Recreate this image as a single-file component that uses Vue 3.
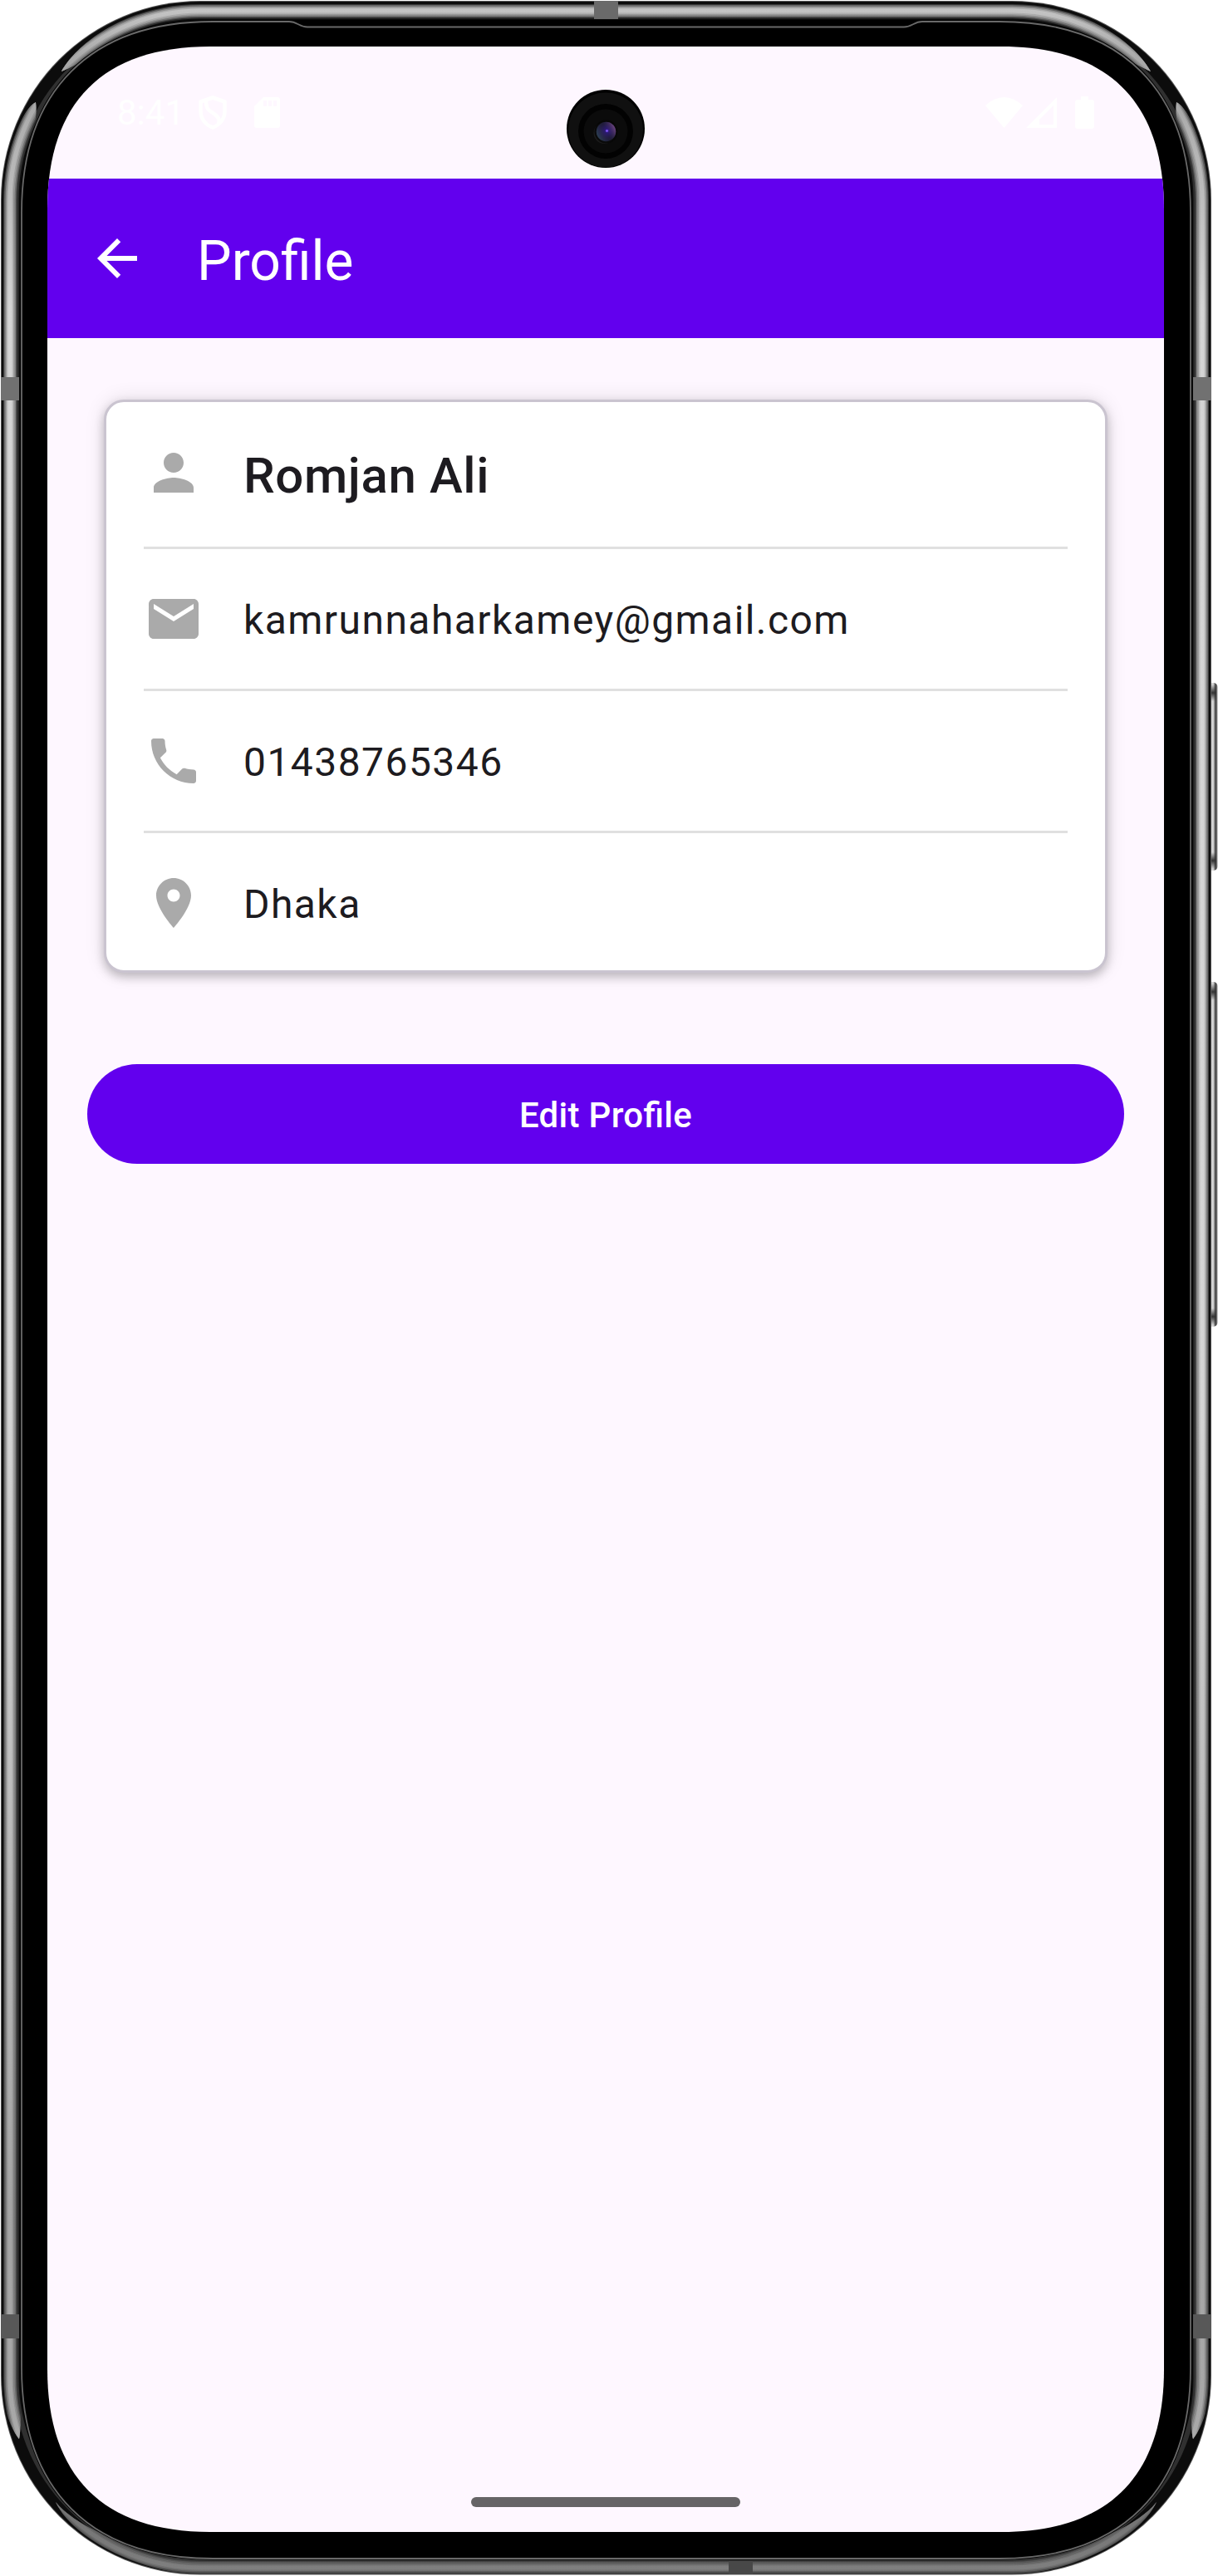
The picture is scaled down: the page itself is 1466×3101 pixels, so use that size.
<script setup>
const rows = [
  { id: 'name', text: 'Romjan Ali', lead: true, icon: 'M12 12c2.21 0 4-1.79 4-4s-1.79-4-4-4-4 1.79-4 4 1.79 4 4 4zm0 2c-2.67 0-8 1.34-8 4v2h16v-2c0-2.66-5.33-4-8-4z' },
  { id: 'email', text: 'kamrunnaharkamey@gmail.com', icon: 'M20 4H4c-1.1 0-1.99.9-1.99 2L2 18c0 1.1.9 2 2 2h16c1.1 0 2-.9 2-2V6c0-1.1-.9-2-2-2zm0 4l-8 5-8-5V6l8 5 8-5v2z' },
  { id: 'phone', text: '01438765346', icon: 'M6.62 10.79c1.44 2.83 3.76 5.14 6.59 6.59l2.2-2.2c.27-.27.67-.36 1.02-.24 1.12.37 2.33.57 3.57.57.55 0 1 .45 1 1V20c0 .55-.45 1-1 1-9.39 0-17-7.61-17-17 0-.55.45-1 1-1h3.5c.55 0 1 .45 1 1 0 1.25.2 2.45.57 3.57.11.35.03.74-.25 1.02l-2.2 2.2z' },
  { id: 'place', text: 'Dhaka', icon: 'M12 2C8.13 2 5 5.13 5 9c0 5.25 7 13 7 13s7-7.75 7-13c0-3.87-3.13-7-7-7zm0 9.5c-1.38 0-2.5-1.12-2.5-2.5s1.12-2.5 2.5-2.5 2.5 1.12 2.5 2.5-1.12 2.5-2.5 2.5z' },
]

const antennas = [
  { x: 715, y: 1, w: 29, h: 22, c: '#6a6a6a' },
  { x: 877, y: 3083, w: 29, h: 16, c: '#484848' },
  { x: 1, y: 454, w: 22, h: 28, c: '#717171' },
  { x: 1436, y: 454, w: 22, h: 28, c: '#717171' },
  { x: 1, y: 2786, w: 22, h: 29, c: '#585858' },
  { x: 1436, y: 2786, w: 22, h: 29, c: '#585858' },
]

const keys = [
  { y: 822, h: 226 },
  { y: 1182, h: 415 },
]

const sheen = [
  { w: 16, o: 0.22 },
  { w: 14, o: 0.3 },
  { w: 11, o: 0.4 },
  { w: 8, o: 0.5 },
  { w: 5, o: 0.7 },
]
</script>

<template>
  <div class="device">
    <svg class="frame" viewBox="0 0 1466 3101" aria-hidden="true">
      <defs>
        <linearGradient id="metal" gradientUnits="userSpaceOnUse" x1="0" y1="0" x2="0" y2="3101">
          <stop offset="0" stop-color="#d2d2d2" />
          <stop offset=".03" stop-color="#a8a8a8" />
          <stop offset=".05" stop-color="#b8b8b8" />
          <stop offset=".12" stop-color="#dedede" />
          <stop offset=".55" stop-color="#dedede" />
          <stop offset=".86" stop-color="#acacac" />
          <stop offset=".945" stop-color="#b0b0b0" />
          <stop offset=".975" stop-color="#787878" />
          <stop offset="1" stop-color="#868686" />
        </linearGradient>
        <linearGradient id="key" x1="0" x2="1" y1="0" y2="0">
          <stop offset="0" stop-color="#c4c4c4" />
          <stop offset=".55" stop-color="#d6d6d6" />
          <stop offset=".8" stop-color="#3a3a3a" />
          <stop offset="1" stop-color="#9a9a9a" />
        </linearGradient>
        <linearGradient id="keyEnds" x1="0" x2="0" y1="0" y2="1">
          <stop offset="0" stop-color="#333" stop-opacity="0" />
          <stop offset=".5" stop-color="#333" />
          <stop offset="1" stop-color="#333" stop-opacity="0" />
        </linearGradient>
        <clipPath id="bands">
          <path d="M74 86C90 58 130 22 215 0H1244C1329 22 1369 58 1385 86C1370 80 1320 48 1244 40H215C140 48 90 80 74 86Z" />
          <path d="M43 123C28 130 8 175 0 240V2870C4 2900 14 2925 23 2936C26 2925 24 2890 30 2850V240C34 190 46 150 43 123Z" />
          <path d="M1416 123C1431 130 1451 175 1459 240V2870C1455 2900 1445 2925 1436 2936C1433 2925 1435 2890 1429 2850V240C1425 190 1413 150 1416 123Z" />
          <path d="M67 3012C85 3050 150 3092 240 3101H1219C1309 3092 1374 3050 1392 3012C1370 3040 1310 3070 1219 3076H240C150 3070 90 3040 67 3012Z" />
        </clipPath>
      </defs>

      <g v-for="k in keys" :key="k.y">
        <rect x="1454" :y="k.y" width="11.5" :height="k.h" rx="5" fill="url(#key)" />
        <rect x="1457" :y="k.y + 2" width="7" height="20" fill="url(#keyEnds)" />
        <rect x="1457" :y="k.y + k.h - 22" width="7" height="20" fill="url(#keyEnds)" />
      </g>

      <rect x="1" y="1" width="1457" height="3098.5" rx="240" fill="#555" />
      <rect x="2" y="2" width="1455" height="3096.5" rx="239" fill="#0c0c0c" />
      <rect x="19.5" y="19.5" width="1420" height="3064" rx="221" fill="none" stroke="#303030" stroke-width="6" />
      <g clip-path="url(#bands)">
        <rect
          v-for="s in sheen" :key="s.w"
          x="12" y="13" width="1435" height="3078" rx="229"
          fill="none" stroke="url(#metal)" :stroke-width="s.w" :stroke-opacity="s.o"
        />
      </g>
      <rect v-for="a in antennas" :key="a.x + '-' + a.y" :x="a.x" :y="a.y" :width="a.w" :height="a.h" :fill="a.c" />
      <path
        d="M256 24C108 24 24 108 24 256V2850C24 2998 108 3081.5 256 3081.500H1203C1351 3081.5 1435 2998 1435 2850V256C1435 108 1351 24 1203 24Z"
        fill="#000"
      />
      <path
        d="M256 26C109 26 26 109 26 256V2850C26 2997 109 3080 256 3080H1203C1350 3080 1433 2997 1433 2850V256C1433 109 1350 26 1203 26H1110C1100 26 1098 32.5 1088 32.5H370C360 32.5 358 26 348 26Z"
        fill="#000" stroke="#696969" stroke-width="1.8"
      />
    </svg>

    <main class="screen">
      <header class="status">
        <span class="clock">8:41</span>
        <svg class="shield" viewBox="0 0 34 41">
          <path d="M17 2.5L31.5 7.5V19C31.5 28 25.5 35.5 17 38.5C8.5 35.5 2.5 28 2.5 19V7.5Z" fill="none" stroke="#fff" stroke-width="4.5" stroke-linejoin="round" />
          <path d="M9 6C9 19 14 18 20 23C26 28 25 31 24 34" fill="none" stroke="#fff" stroke-width="4.5" />
        </svg>
        <svg class="sd" viewBox="0 0 31 37">
          <path d="M11 0H28a3 3 0 0 1 3 3V34a3 3 0 0 1-3 3H3a3 3 0 0 1-3-3V11ZM11 4V11H15V4ZM17 4V11H21V4ZM23 4V11H27V4Z" fill="#fff" fill-rule="evenodd" />
        </svg>
        <span class="spacer"></span>
        <svg class="wifi" viewBox="0 0 45 37"><path d="M0 10Q22.5-10 45 10L22.5 37Z" fill="#fff" /></svg>
        <svg class="cell" viewBox="0 0 37 37"><path d="M37 0V37H0ZM33 10L16 27V33H33Z" fill="#fff" fill-rule="evenodd" /></svg>
        <svg class="battery" viewBox="0 0 23 39"><path d="M7 0H16V4H20a3 3 0 0 1 3 3V36a3 3 0 0 1-3 3H3a3 3 0 0 1-3-3V7a3 3 0 0 1 3-3H7Z" fill="#fff" /></svg>
      </header>

      <nav class="appbar">
        <svg class="icon" viewBox="0 0 24 24"><path d="M20 11H7.83l5.59-5.59L12 4l-8 8 8 8 1.41-1.41L7.83 13H20v-2z" fill="#fff" /></svg>
        <h1>Profile</h1>
      </nav>

      <section class="card">
        <div v-for="r in rows" :key="r.id" class="row" :class="{ lead: r.lead }">
          <svg class="icon" viewBox="0 0 24 24"><path :d="r.icon" fill="#aaa" /></svg>
          <span>{{ r.text }}</span>
        </div>
      </section>

      <button class="edit" type="button">Edit Profile</button>

      <div class="home"></div>
    </main>

    <svg class="camera" viewBox="0 0 94 94" aria-hidden="true">
      <defs>
        <radialGradient id="lens" cx=".55" cy=".45" r=".6">
          <stop offset="0" stop-color="#4a22c8" />
          <stop offset=".2" stop-color="#2a1a6c" />
          <stop offset=".6" stop-color="#221c40" />
          <stop offset="1" stop-color="#181e2a" />
        </radialGradient>
        <linearGradient id="tint" x1="0" y1=".7" x2="1" y2=".2">
          <stop offset="0" stop-color="#3b6070" stop-opacity=".6" />
          <stop offset=".5" stop-color="#302060" stop-opacity="0" />
          <stop offset="1" stop-color="#a060a8" stop-opacity=".8" />
        </linearGradient>
      </defs>
      <circle cx="47" cy="47" r="47" fill="#000" />
      <circle cx="47" cy="48.5" r="45" fill="#101010" />
      <circle cx="47" cy="50" r="33" fill="#020202" />
      <circle cx="47" cy="50" r="26.5" fill="#0b0b0b" />
      <circle cx="45.5" cy="52" r="13" fill="#1c1c1c" />
      <circle cx="47.5" cy="50.5" r="14" fill="#060606" fill-opacity=".8" />
      <circle cx="47.5" cy="50.5" r="11.7" fill="url(#lens)" />
      <circle cx="47.5" cy="50.5" r="11.7" fill="url(#tint)" />
      <circle cx="48.5" cy="49.5" r="1.3" fill="#8a60ff" />
    </svg>
  </div>
</template>

<style>
body {
  margin: 0;
  background: #fff;
}
</style>

<style scoped>
.device {
  position: relative;
  box-sizing: border-box;
  width: 1466px;
  height: 3101px;
  padding: 56px 65px 53px 57px;
  overflow: hidden;
  font-family: Roboto, sans-serif;
}
.frame {
  position: absolute;
  inset: 0;
  width: 1466px;
  height: 3101px;
}
.camera {
  position: absolute;
  left: 682px;
  top: 108px;
  width: 94px;
  height: 94px;
}
.screen {
  position: relative;
  display: flex;
  flex-direction: column;
  width: 1344px;
  height: 2992px;
  background: #fef7ff;
  clip-path: path('M0 196C0 67 67 0 196 0H1148C1277 0 1344 67 1344 196V2796C1344 2925 1277 2992 1148 2992H196C67 2992 0 2925 0 2796Z');
}
.status {
  display: flex;
  align-items: center;
  box-sizing: border-box;
  height: 159px;
  padding: 0 84px;
  color: #fff;
}
.clock {
  width: 98px;
  font-size: 42px;
  font-weight: 400;
  line-height: 50px;
}
.spacer {
  flex: 1;
}
.shield {
  width: 34px;
  height: 41px;
}
.sd {
  width: 31px;
  height: 37px;
  margin-left: 33px;
}
.wifi {
  width: 45px;
  height: 37px;
}
.cell {
  width: 37px;
  height: 37px;
  margin-left: 4px;
}
.battery {
  width: 23px;
  height: 39px;
  margin-left: 22px;
}
.appbar {
  display: flex;
  align-items: center;
  gap: 60px;
  height: 192px;
  padding-left: 48px;
  background: #6200ee;
  color: #fff;
}
.appbar h1 {
  margin: 7px 0 0;
  font-size: 66px;
  font-weight: 400;
  line-height: 78px;
}
.icon {
  display: block;
  flex: none;
  width: 72px;
  height: 72px;
}
.card {
  box-sizing: border-box;
  margin: 74px 68px 0;
  padding: 0 45px;
  height: 690px;
  border: 3px solid #cac4d0;
  border-radius: 24px;
  background: #fff;
  box-shadow: 0 5px 12px rgba(0, 0, 0, 0.22), 0 0 24px rgba(0, 0, 0, 0.11);
}
.row {
  display: flex;
  align-items: center;
  box-sizing: border-box;
  height: 171px;
  gap: 48px;
  border-bottom: 3px solid #e0e0e0;
  color: #1d1b20;
  font-size: 48px;
  letter-spacing: 1.44px;
  line-height: 72px;
}
.row:last-child {
  height: 168px;
  border-bottom: 0;
}
.row span {
  margin-top: 3px;
}
.row.lead {
  height: 177px;
  font-size: 60px;
  font-weight: 500;
  letter-spacing: 0.6px;
}
.row.lead .icon {
  margin-bottom: 4px;
}
.edit {
  margin: 110px 48px 0;
  height: 120px;
  padding: 3px 0 0;
  border: 0;
  border-radius: 60px;
  background: #6200ee;
  color: #fff;
  font: 500 42px/60px Roboto, sans-serif;
  font-feature-settings: 'liga' 1;
  letter-spacing: 0.3px;
}
.home {
  width: 324px;
  height: 12px;
  margin: auto auto 30px 510px;
  border-radius: 6px;
  background: #666466;
}
</style>
